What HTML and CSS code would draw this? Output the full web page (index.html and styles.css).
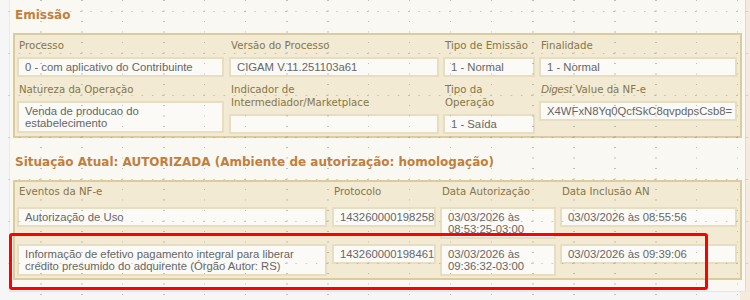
FILE: index.html
```html
<!DOCTYPE html>
<html lang="pt">
<head>
  <meta charset="UTF-8">
  <meta name="viewport" content="width=device-width, initial-scale=1.0">
  <title>NF-e - Emissão</title>
  <link rel="stylesheet" href="styles.css">
</head>
<body>
  <div class="panel">
    <h2 class="section-title">Emissão</h2>
    <div class="box">
      <div class="grid grid-emissao">
        <div class="field">
          <div class="label">Processo</div>
          <div class="value">0 - com aplicativo do Contribuinte</div>
        </div>
        <div class="field">
          <div class="label">Versão do Processo</div>
          <div class="value">CIGAM V.11.251103a61</div>
        </div>
        <div class="field">
          <div class="label">Tipo de Emissão</div>
          <div class="value">1 - Normal</div>
        </div>
        <div class="field">
          <div class="label">Finalidade</div>
          <div class="value">1 - Normal</div>
        </div>
        <div class="field">
          <div class="label">Natureza da Operação</div>
          <div class="value">Venda de producao do estabelecimento</div>
        </div>
        <div class="field">
          <div class="label">Indicador de<br>Intermediador/Marketplace</div>
          <div class="value">&nbsp;</div>
        </div>
        <div class="field">
          <div class="label">Tipo da<br>Operação</div>
          <div class="value">1 - Saída</div>
        </div>
        <div class="field">
          <div class="label"><em>Digest</em> Value da NF-e</div>
          <div class="value nowrap">X4WFxN8Yq0QcfSkC8qvpdpsCsb8=</div>
        </div>
      </div>
    </div>

    <h2 class="section-title second">Situação Atual: AUTORIZADA (Ambiente de autorização: homologação)</h2>
    <div class="box">
      <div class="grid grid-eventos">
        <div class="label head">Eventos da NF-e</div>
        <div class="label head">Protocolo</div>
        <div class="label head">Data Autorização</div>
        <div class="label head">Data Inclusão AN</div>

        <div class="value">Autorização de Uso</div>
        <div class="value">143260000198258</div>
        <div class="value">03/03/2026 às 08:53:25-03:00</div>
        <div class="value">03/03/2026 às 08:55:56</div>

        <div class="value">Informação de efetivo pagamento integral para liberar crédito presumido do adquirente (Órgão Autor: RS)</div>
        <div class="value">143260000198461</div>
        <div class="value">03/03/2026 às 09:36:32-03:00</div>
        <div class="value">03/03/2026 às 09:39:06</div>
      </div>
    </div>
  </div>

  <div class="highlight"></div>
</body>
</html>
```

FILE: styles.css
```css
html, body {
  margin: 0;
  padding: 0;
}
body {
  position: relative;
  width: 750px;
  height: 300px;
  overflow: hidden;
  background: linear-gradient(to right, #f6f6f6 740px, #f4ebdc 740px);
  font-family: "DejaVu Sans", sans-serif;
}
/* faint dotted grid over the whole capture */
body::after {
  content: "";
  position: absolute;
  inset: 0;
  pointer-events: none;
  background-image:
    radial-gradient(circle at 9px 11.5px, rgba(120, 120, 120, 0.45) 0.6px, transparent 0.9px),
    radial-gradient(circle at 40.5px 0.5px, rgba(120, 120, 120, 0.45) 0.6px, transparent 0.9px);
  background-size: 10.25px 42px, 41px 10.5px;
}
.panel {
  margin-left: 9px;
  width: 729px;
  padding: 7px 3px 11px;
  background-color: #faf8f3;
  border-left: 1px solid #eeeae2;
  border-right: 1px solid #ead9bb;
  border-bottom: 1px solid #ece4d6;
}
.section-title {
  margin: 0 0 10px 2px;
  font-size: 12px;
  line-height: 16px;
  font-weight: bold;
  color: #c17f3d;
}
.section-title.second {
  margin-top: 16px;
  margin-bottom: 10px;
}
.box {
  background-color: #f2ead3;
  border: 2px solid #dccb9d;
  padding: 4px 3px 2px 2px;
}
.box + .section-title + .box {
  padding-top: 3px;
}
.grid {
  display: grid;
  column-gap: 4px;
  align-items: start;
}
.grid-emissao {
  grid-template-columns: 207px 211px 92px 198px;
  row-gap: 6px;
}
.grid-emissao .field:nth-child(4n+2) {
  margin-left: 1px;
}
.grid-eventos {
  grid-template-columns: 310px 105px 116px 177px;
  row-gap: 5px;
}
.grid-eventos .value:nth-child(4n+6),
.grid-eventos .head:nth-child(2) {
  margin-left: 1px;
}
.label {
  font-size: 10.2px;
  line-height: 13px;
  color: #86764a;
  padding-left: 2px;
  margin-bottom: 5px;
}
.label em {
  font-family: "Liberation Sans", Arial, sans-serif;
  font-size: 11px;
}
.label.head {
  margin-bottom: 4px;
}
.value {
  background-color: #fbfaf6;
  border: 2px solid #e7ddc1;
  padding: 2px 6px;
  font-family: "Liberation Sans", Arial, sans-serif;
  font-size: 11.3px;
  line-height: 12px;
  color: #666;
}
.nowrap {
  white-space: nowrap;
}
.highlight {
  position: absolute;
  left: 9px;
  top: 233px;
  width: 699px;
  height: 57px;
  box-sizing: border-box;
  border: 3px solid #ff0000;
  border-radius: 3px;
  z-index: 2;
}
```
